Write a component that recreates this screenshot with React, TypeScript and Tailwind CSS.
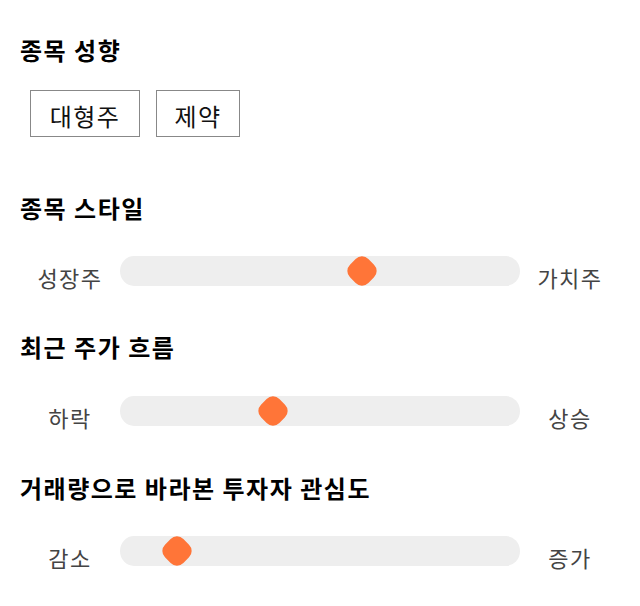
import React from 'react'

const FONT = { fontFamily: '"Noto Sans CJK KR", "Noto Sans", sans-serif' }

interface SliderProps {
  left: string
  right: string
  pos: number
}

function StyleSlider({ left, right, pos }: SliderProps) {
  return (
    <div className="flex items-center h-[30px]">
      <div className="w-[100px] text-center text-[22px] tracking-[1.5px] leading-[30px] text-[#444] pt-3">{left}</div>
      <div className="relative w-[400px] h-[30px] rounded-[14px/15px] bg-[#eeeeee]">
        <div
          className="absolute top-[2px] w-[26px] h-[26px] rotate-45 rounded-[9px] bg-[#ff7538]"
          style={{ left: pos + 2 }}
        />
      </div>
      <div className="w-[100px] text-center text-[22px] tracking-[1.5px] leading-[30px] text-[#444] pt-3">{right}</div>
    </div>
  )
}

export default function App() {
  return (
    <div className="bg-white w-[640px] h-[606px] pl-5 pt-[35px]" style={FONT}>
      <h2 className="text-[24px] tracking-[1.5px] font-bold leading-[30px] text-black">종목 성향</h2>
      <div className="flex gap-4 ml-[10px] mt-[25px]">
        <div className="w-[110px] h-[47px] border border-[#888] flex items-center justify-center text-[24px] tracking-[1.5px] text-[#111] pt-1">
          대형주
        </div>
        <div className="w-[84px] h-[47px] border border-[#888] flex items-center justify-center text-[24px] tracking-[1.5px] text-[#111] pt-1">
          제약
        </div>
      </div>

      <h2 className="text-[24px] tracking-[1.5px] font-bold leading-[30px] text-black mt-[56px]">종목 스타일</h2>
      <div className="mt-[33px]">
        <StyleSlider left="성장주" right="가치주" pos={227} />
      </div>

      <h2 className="text-[24px] tracking-[1.5px] font-bold leading-[30px] text-black mt-[46px]">최근 주가 흐름</h2>
      <div className="mt-[34px]">
        <StyleSlider left="하락" right="상승" pos={138} />
      </div>

      <h2 className="text-[24px] tracking-[1.5px] font-bold leading-[30px] text-black mt-[47px]">거래량으로 바라본 투자자 관심도</h2>
      <div className="mt-[33px]">
        <StyleSlider left="감소" right="증가" pos={42} />
      </div>
    </div>
  )
}
